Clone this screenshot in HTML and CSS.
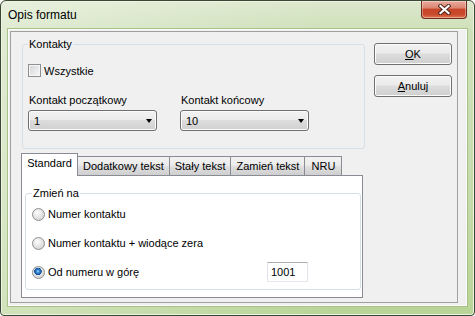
FILE: index.html
```html
<!DOCTYPE html>
<html lang="pl">
<head>
  <meta charset="UTF-8">
  <title>Opis formatu</title>
  <link rel="stylesheet" href="styles.css">
</head>
<body>
  <div class="window">
    <div class="titlebar">
      <span class="title">Opis formatu</span>
      <div class="close-btn">
        <svg width="13" height="11" viewBox="0 0 13 11">
          <path d="M2.5 2 L10.5 9 M10.5 2 L2.5 9" stroke="#4a2218" stroke-width="4" stroke-linecap="square"/>
          <path d="M2.5 2 L10.5 9 M10.5 2 L2.5 9" stroke="#fff" stroke-width="2.2" stroke-linecap="square"/>
        </svg>
      </div>
    </div>

    <div class="client">
      <div class="panel">
        <div class="main-col">
          <fieldset class="group contacts">
            <legend>Kontakty</legend>
            <label class="check-row"><span class="checkbox"></span>Wszystkie</label>
            <div class="range-row">
              <div class="field">
                <div class="field-label">Kontakt początkowy</div>
                <div class="combo"><span>1</span><span class="arrow"></span></div>
              </div>
              <div class="field">
                <div class="field-label">Kontakt końcowy</div>
                <div class="combo"><span>10</span><span class="arrow"></span></div>
              </div>
            </div>
          </fieldset>

          <div class="tabs">
            <div class="tab-strip">
              <div class="tab active">Standard</div>
              <div class="tab">Dodatkowy tekst</div>
              <div class="tab">Stały tekst</div>
              <div class="tab">Zamień tekst</div>
              <div class="tab">NRU</div>
            </div>
            <div class="tab-panel">
              <fieldset class="group change">
                <legend>Zmień na</legend>
                <div class="radio-row"><span class="radio"></span>Numer kontaktu</div>
                <div class="radio-row"><span class="radio"></span>Numer kontaktu + wiodące zera</div>
                <div class="radio-row">
                  <span class="opt"><span class="radio checked"></span>Od numeru w górę</span>
                  <input class="num-input" type="text" value="1001">
                </div>
              </fieldset>
            </div>
          </div>
        </div>

        <div class="side-col">
          <button class="btn"><u>O</u>K</button>
          <button class="btn"><u>A</u>nuluj</button>
        </div>
      </div>
    </div>
  </div>
</body>
</html>
```

FILE: styles.css
```css
* {
  box-sizing: border-box;
}
html, body {
  margin: 0;
}
body {
  font-family: "Liberation Sans", Arial, sans-serif;
  font-size: 11px;
  color: #000;
  background: #fff;
}

/* window frame */
.window {
  width: 475px;
  height: 316px;
  display: flex;
  flex-direction: column;
  padding: 0 7px 9px;
  border: 1px solid #3a4733;
  border-radius: 6px 6px 4px 4px;
  background:
    linear-gradient(90deg, rgba(255,255,255,0.35), rgba(255,255,255,0) 70%),
    linear-gradient(180deg, #dce8cd 0, #cfe1ba 28px, #c6dbac 60%, #b9d497 100%);
  box-shadow: inset 0 0 0 1px #edf4e4;
}
.titlebar {
  height: 28px;
  display: flex;
  justify-content: space-between;
  align-items: flex-start;
}
.title {
  font-size: 12px;
  line-height: 28px;
}
.close-btn {
  width: 46px;
  height: 18px;
  display: flex;
  align-items: center;
  justify-content: center;
  border: 1px solid #6a2a1c;
  border-top: none;
  border-radius: 0 0 4px 4px;
  background: linear-gradient(180deg, #e9ab9e 0, #dc8572 40%, #c8452a 50%, #c94a2c 80%, #e07a52 100%);
  box-shadow: inset 0 0 0 1px rgba(255,255,255,0.35);
}

/* client area */
.client {
  flex: 1;
  padding: 1px 0 0 1px;
  background: #f0f0f0;
  border: 1px solid #fbfbfb;
  box-shadow: 0 0 0 1px #a7c189;
}
.panel {
  width: 448px;
  height: 272px;
  display: flex;
  padding-left: 10px;
  border: 1px solid #a0a0a0;
}
.main-col {
  width: 344px;
  display: flex;
  flex-direction: column;
}
.side-col {
  margin-left: 9px;
  padding-top: 11px;
  display: flex;
  flex-direction: column;
  gap: 10px;
}

/* group boxes */
.group {
  margin: 0;
  border: 1px solid #d5dfe5;
  border-radius: 3px;
}
.group legend {
  padding: 0 1px;
  line-height: 13px;
}
.contacts {
  margin: 6px 0 0 1px;
  padding: 13px 5px 17px;
}
.check-row {
  height: 13px;
  display: flex;
  align-items: center;
  gap: 3px;
}
.checkbox {
  width: 13px;
  height: 13px;
  border: 1px solid #8e8f8f;
  background: linear-gradient(135deg, #d2d4d6, #f8f8f8);
  box-shadow: inset 0 0 0 1px #f6f6f6;
}
.range-row {
  margin-top: 17px;
  display: flex;
  gap: 23px;
}
.field {
  width: 129px;
}
.field-label {
  padding-left: 1px;
  line-height: 13px;
  margin-bottom: 3px;
}
.combo {
  height: 21px;
  display: flex;
  align-items: center;
  justify-content: space-between;
  padding: 0 4px 0 5px;
  border: 1px solid #707070;
  border-radius: 3px;
  background: linear-gradient(180deg, #f2f2f2 0, #ebebeb 45%, #dddddd 50%, #cfcfcf 100%);
  box-shadow: inset 0 0 0 1px #fbfbfb;
}
.arrow {
  width: 0;
  height: 0;
  border-left: 3.5px solid transparent;
  border-right: 3.5px solid transparent;
  border-top: 4px solid #000;
}

/* tabs */
.tabs {
  width: 342px;
  margin-top: 4px;
}
.tab-strip {
  height: 22px;
  display: flex;
  align-items: flex-end;
}
.tab {
  height: 19px;
  min-width: 38px;
  padding: 3px 5px 0;
  line-height: 13px;
  text-align: center;
  margin-left: -1px;
  border: 1px solid #898c95;
  border-bottom: none;
  background: linear-gradient(180deg, #f3f3f3 0, #ebebeb 45%, #dedede 55%, #cfcfcf 100%);
}
.tab.active {
  width: 57px;
  height: 23px;
  margin-left: 0;
  margin-bottom: -1px;
  position: relative;
  z-index: 1;
  background: #fff;
}
.tab-panel {
  height: 123px;
  padding: 11px 1px 0 3px;
  border: 1px solid #898c95;
  background: #fff;
}
.change {
  padding: 4px 6px 7px;
}
.radio-row {
  height: 20px;
  display: flex;
  align-items: center;
  gap: 3px;
}
.radio-row + .radio-row {
  margin-top: 9px;
}
.opt {
  width: 232px;
  display: flex;
  align-items: center;
  gap: 3px;
}
.radio {
  width: 13px;
  height: 13px;
  border-radius: 50%;
  border: 1px solid #8e8f8f;
  background: radial-gradient(circle at 40% 35%, #fdfdfd 0, #e6e6e6 45%, #c9c9c9 100%);
}
.radio.checked {
  background:
    radial-gradient(circle at 45% 40%, #a6dcff 0, #3a8ad6 1.5px, #0f4f95 3.5px, rgba(15,79,149,0) 4px),
    radial-gradient(circle at 40% 35%, #fdfdfd 0, #e6e6e6 45%, #c9c9c9 100%);
}
.num-input {
  width: 41px;
  height: 20px;
  padding: 0 3px;
  font: inherit;
  color: #000;
  border: 1px solid #e2e3ea;
  border-top-color: #abadb3;
  border-bottom-color: #e3e9ef;
  outline: none;
}

/* buttons */
.btn {
  width: 78px;
  height: 22px;
  padding: 0;
  font: inherit;
  color: #000;
  border: 1px solid #707070;
  border-radius: 3px;
  background: linear-gradient(180deg, #f2f2f2 0, #ebebeb 45%, #dddddd 50%, #cfcfcf 100%);
  box-shadow: inset 0 0 0 1px #fcfcfc;
}
```
